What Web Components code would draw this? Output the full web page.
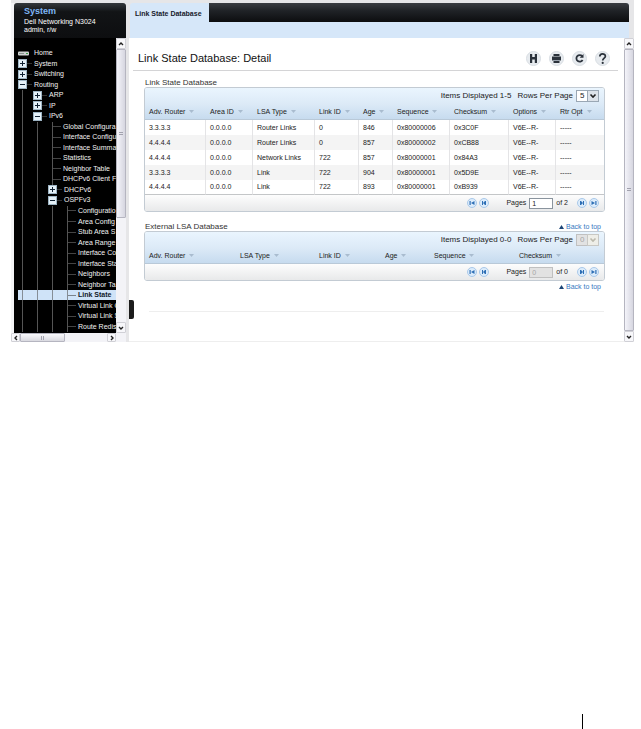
<!DOCTYPE html>
<html lang="en">
<head>
<meta charset="utf-8">
<meta name="viewport" content="width=device-width, initial-scale=1">
<title>Link State Database: Detail</title>
<style>
    body {
        margin: 0;
        min-height: 100vh;
        display: flex;
        flex-direction: column;
        background: #fff;
        color: #222;
        font: 7px/10px "Liberation Sans", Arial, sans-serif;
    }

    footer {
        margin-top: auto;
        padding-right: 58px;
        display: flex;
        justify-content: flex-end;
    }

    footer span {
        width: 1px;
        height: 15px;
        background: #000;
    }
</style>
</head>
<body>
<app-frame>
    <device-header slot="device" name="System" model="Dell Networking N3024" user="admin, r/w"></device-header>
    <nav-tree slot="nav"></nav-tree>
    <scroll-bar slot="nav-y" style="--thumb: 62%"></scroll-bar>
    <scroll-bar slot="nav-x" horizontal style="--thumb: 52%"></scroll-bar>
    <tab-bar slot="tabs">Link State Database</tab-bar>
    <page-title>Link State Database: Detail</page-title>
    <data-table id="lsdb"></data-table>
    <data-table id="external"></data-table>
    <scroll-bar slot="main-y" style="--thumb: 100%"></scroll-bar>
</app-frame>
<footer><span></span></footer>

<script>
class AppFrame extends HTMLElement {
    constructor() {
        super();
        this.attachShadow({ mode: 'open' });
        this.shadowRoot.innerHTML = `
            <style>
                :host {
                    display: grid;
                    grid-template-columns: 115px 1fr;
                    column-gap: 3px;
                    margin: 0 7px 0 11px;
                    padding-top: 3px;
                    background: #e6e6e8;
                }

                aside {
                    display: flex;
                    flex-direction: column;
                    background: #f4f4f6;
                }

                .nav {
                    flex: 1;
                    display: flex;
                    margin-left: 3px;
                    background: #000;
                }

                ::slotted(nav-tree) {
                    flex: 1;
                    min-width: 0;
                }

                .right {
                    display: flex;
                    flex-direction: column;
                    min-width: 0;
                }

                .body {
                    flex: 1;
                    display: flex;
                    position: relative;
                    background: #fff;
                }

                main {
                    flex: 1;
                    display: flex;
                    flex-direction: column;
                    gap: 3px;
                    min-width: 0;
                    border-bottom: 1px solid #eee;
                }

                .rule {
                    height: 1px;
                    margin: 16px 20px 29px;
                    border: 0;
                    background: #eee;
                }

                .handle {
                    position: absolute;
                    left: 0;
                    bottom: 23px;
                    width: 5px;
                    height: 19px;
                    padding: 0;
                    border: 0;
                    border-radius: 0 2px 2px 0;
                    background: #1c1c1c;
                }
            </style>
            <aside>
                <slot name="device"></slot>
                <div class="nav"><slot name="nav"></slot><slot name="nav-y"></slot></div>
                <slot name="nav-x"></slot>
            </aside>
            <div class="right">
                <slot name="tabs"></slot>
                <div class="body">
                    <main>
                        <slot></slot>
                        <hr class="rule">
                    </main>
                    <slot name="main-y"></slot>
                    <button class="handle" aria-label="Collapse navigation"></button>
                </div>
            </div>
        `;
    }
}

class DeviceHeader extends HTMLElement {
    connectedCallback() {
        this.attachShadow({ mode: 'open' });
        this.shadowRoot.innerHTML = `
            <style>
                :host {
                    display: block;
                    box-sizing: border-box;
                    height: 35px;
                    margin-left: 3px;
                    padding: 3px 10px 0;
                    border-radius: 3px 3px 0 0;
                    background: linear-gradient(#34383c, #121416 25%, #0d0e10);
                    color: #fff;
                    line-height: 8px;
                    white-space: nowrap;
                }

                h2 {
                    margin: 0 0 2px;
                    color: #7fb6f5;
                    font-size: 9px;
                    line-height: 10px;
                }

                p {
                    margin: 0;
                }
            </style>
            <h2>${this.getAttribute('name')}</h2>
            <p>${this.getAttribute('model')}</p>
            <p>${this.getAttribute('user')}</p>
        `;
    }
}

// [depth, state, label], where state is '+', '-', 'home' or '' for a leaf
const TREE = [
    [0, 'home', 'Home'],
    [0, '+', 'System'],
    [0, '+', 'Switching'],
    [0, '-', 'Routing'],
    [1, '+', 'ARP'],
    [1, '+', 'IP'],
    [1, '-', 'IPv6'],
    [2, '', 'Global Configura'],
    [2, '', 'Interface Configu'],
    [2, '', 'Interface Summa'],
    [2, '', 'Statistics'],
    [2, '', 'Neighbor Table'],
    [2, '', 'DHCPv6 Client F'],
    [2, '+', 'DHCPv6'],
    [2, '-', 'OSPFv3'],
    [3, '', 'Configuratio'],
    [3, '', 'Area Config'],
    [3, '', 'Stub Area S'],
    [3, '', 'Area Range'],
    [3, '', 'Interface Co'],
    [3, '', 'Interface Sta'],
    [3, '', 'Neighbors'],
    [3, '', 'Neighbor Ta'],
    [3, '', 'Link State'],
    [3, '', 'Virtual Link C'],
    [3, '', 'Virtual Link S'],
    [3, '', 'Route Redis']
];

class NavTree extends HTMLElement {
    connectedCallback() {
        this.attachShadow({ mode: 'open' });
        this.shadowRoot.innerHTML = `
            <style>
                :host {
                    display: flex;
                    overflow: hidden;
                    background: #000;
                }

                ul {
                    flex: 1;
                    display: flex;
                    flex-direction: column;
                    min-width: 0;
                    margin: 0;
                    padding: 10px 0 1px 4px;
                    list-style: none;
                }

                li {
                    flex: 1 0 10px;
                    display: flex;
                    align-items: stretch;
                    white-space: nowrap;
                }

                i {
                    flex: none;
                    width: 15px;
                    background: linear-gradient(#555, #555) 4px 0 / 1px 100% no-repeat;
                }

                .node {
                    flex: none;
                    display: flex;
                    align-items: center;
                    width: 16px;
                }

                .leaf {
                    width: 15px;
                    background:
                        linear-gradient(#555, #555) 4px 0 / 1px 100% no-repeat,
                        linear-gradient(90deg, #444, #444) 4px 50% / 9px 1px no-repeat;
                }

                .branch {
                    background: linear-gradient(90deg, #333, #333) 9px 50% / 5px 1px no-repeat;
                }

                a {
                    display: flex;
                    align-items: center;
                    color: #f2f2f2;
                    text-decoration: none;
                }

                .current {
                    background: #cfe3f8;
                }

                .current a {
                    color: #101828;
                    font-weight: bold;
                }

                .current i, .current .leaf {
                    opacity: 0.6;
                }

                svg {
                    display: block;
                }
            </style>
            <ul>${TREE.map(row => this.renderRow(row)).join('')}</ul>
        `;
    }

    renderRow([depth, state, label]) {
        const current = label === 'Link State';
        return `
            <li class="${current ? 'current' : ''}">
                ${'<i></i>'.repeat(depth)}
                <span class="node ${state === '' ? 'leaf' : state === 'home' ? '' : 'branch'}">${this.renderIcon(state)}</span>
                <a href="#" ${current ? 'aria-current="page"' : ''}>${label}</a>
            </li>
        `;
    }

    renderIcon(state) {
        if (state === 'home') {
            return `
                <svg width="11" height="5" viewBox="0 0 11 5">
                    <rect width="11" height="4" y="0.5" rx="1" fill="#cfd3d2"/>
                    <path d="M1 2.5h5" stroke="#8b9492"/>
                    <path d="M8 2.5h2" stroke="#3f9b4a"/>
                </svg>
            `;
        }
        if (state === '') {
            return '';
        }
        return `
            <svg width="9" height="9" viewBox="0 0 9 9">
                <rect x="0.5" y="0.5" width="8" height="8" fill="#e4f0f8" stroke="#9db4c4"/>
                <path d="M2 4.5h5${state === '+' ? 'M4.5 2v5' : ''}" stroke="#123"/>
            </svg>
        `;
    }
}

class ScrollBar extends HTMLElement {
    connectedCallback() {
        const horizontal = this.hasAttribute('horizontal');
        this.attachShadow({ mode: 'open' });
        this.shadowRoot.innerHTML = `
            <style>
                :host {
                    flex: none;
                    display: flex;
                    flex-direction: column;
                    width: 10px;
                    background: #f3f3f7;
                }

                :host([horizontal]) {
                    flex-direction: row;
                    width: auto;
                    height: 9px;
                    padding-right: 10px;
                }

                button {
                    flex: none;
                    display: grid;
                    place-items: center;
                    width: 10px;
                    height: 11px;
                    padding: 0;
                    border: 1px solid #d0d0d6;
                    border-radius: 1px;
                    background: #f7f7fa;
                }

                :host([horizontal]) button {
                    width: 9px;
                    height: 9px;
                }

                .track {
                    flex: 1;
                    display: flex;
                    flex-direction: inherit;
                }

                .thumb {
                    box-sizing: border-box;
                    height: var(--thumb);
                    display: grid;
                    place-items: center;
                    border: 1px solid #b5b5c0;
                    border-radius: 1px;
                    background: linear-gradient(90deg, #f4f4fa, #d6d6e0);
                }

                :host([horizontal]) .thumb {
                    width: var(--thumb);
                    height: 9px;
                    background: linear-gradient(#fafafd, #d9d9e0);
                }

                .grip {
                    width: 4px;
                    height: 4px;
                    background: repeating-linear-gradient(#a2a2ae 0 1px, transparent 1px 2px);
                }

                :host([horizontal]) .grip {
                    background: repeating-linear-gradient(90deg, #a2a2ae 0 1px, transparent 1px 2px);
                }
            </style>
            <button aria-label="Scroll back">${this.arrow(horizontal ? 'M4 1L2 3L4 5' : 'M1 4L3 2L5 4')}</button>
            <div class="track"><div class="thumb"><div class="grip"></div></div></div>
            <button aria-label="Scroll forward">${this.arrow(horizontal ? 'M2 1L4 3L2 5' : 'M1 2L3 4L5 2')}</button>
        `;
    }

    arrow(path) {
        return `<svg width="6" height="6" viewBox="0 0 6 6"><path d="${path}" fill="none" stroke="#222" stroke-width="1.4"/></svg>`;
    }
}

class TabBar extends HTMLElement {
    connectedCallback() {
        this.attachShadow({ mode: 'open' });
        this.shadowRoot.innerHTML = `
            <style>
                :host {
                    display: flex;
                    align-items: flex-start;
                    height: 35px;
                    margin: 0 5px 0 1px;
                    border-radius: 3px 3px 0 0;
                    overflow: hidden;
                    background: #d6e7f9;
                }

                a {
                    height: 20px;
                    padding: 0 7px 0 5px;
                    color: #16202c;
                    font-weight: bold;
                    line-height: 22px;
                    text-decoration: none;
                    white-space: nowrap;
                }

                .bar {
                    flex: 1;
                    height: 19px;
                    background: linear-gradient(#3a3d42, #202327 40%, #0c0d0f);
                }
            </style>
            <a href="#"><slot></slot></a>
            <div class="bar"></div>
        `;
    }
}

const TOOLS = [
    ['Save', '<path d="M5 4h2.2v3h2.6V4H12v9H9.8V9.5H7.2V13H5z" fill="#2b323b"/>'],
    ['Print', '<path d="M5.5 4h6v2h-6zM4 6.5h9v4H4zM5.5 11h6v2h-6z" fill="#2b323b"/><path d="M5 10.5h7" stroke="#9aa3ad"/>'],
    ['Refresh', '<path d="M11.2 6.2A3.3 3.3 0 1 0 11.6 10" fill="none" stroke="#2b323b" stroke-width="1.8"/><path d="M12.5 4v3.8H8.7z" fill="#2b323b"/>'],
    ['Help', '<path d="M5.8 6.5C5.8 3 11.4 3.1 11.4 6.3C11.4 8.2 8.7 8.2 8.7 10.6" fill="none" stroke="#2b323b" stroke-width="1.7"/><circle cx="8.7" cy="12.9" r="1.1" fill="#2b323b"/>']
];

class PageTitle extends HTMLElement {
    connectedCallback() {
        this.attachShadow({ mode: 'open' });
        this.shadowRoot.innerHTML = `
            <style>
                :host {
                    display: flex;
                    align-items: center;
                    justify-content: space-between;
                    height: 24px;
                    margin: 0 6px 0 4px;
                    padding: 8px 7px 0 5px;
                    border-bottom: 1px solid #d4d4d6;
                }

                h1 {
                    margin: 0;
                    color: #111;
                    font-size: 11px;
                    font-weight: normal;
                    line-height: 16px;
                }

                .tools {
                    display: flex;
                    gap: 6px;
                }

                button {
                    width: 17px;
                    height: 17px;
                    padding: 0;
                    border: 0;
                    background: none;
                }

                svg {
                    display: block;
                }
            </style>
            <h1><slot></slot></h1>
            <div class="tools">
                ${TOOLS.map(([label, art]) => `
                    <button aria-label="${label}">
                        <svg width="17" height="17" viewBox="0 0 17 17">
                            <circle cx="8.5" cy="8.5" r="7" fill="#e7ebef" stroke="#d9dee3"/>
                            ${art}
                        </svg>
                    </button>
                `).join('')}
            </div>
        `;
    }
}

class DataTable extends HTMLElement {
    set data(data) {
        if (!this.shadowRoot) {
            this.attachShadow({ mode: 'open' });
        }
        this.render(data);
    }

    render({ caption, columns, rows, shown, perPage, page, pages, topLink, bottomLink }) {
        const disabled = rows.length === 0 ? 'disabled' : '';
        this.shadowRoot.innerHTML = `
            <style>
                :host {
                    display: block;
                    margin: 0 19px 0 15px;
                }

                .heading {
                    display: flex;
                    align-items: flex-end;
                    justify-content: space-between;
                    height: 13px;
                    color: #333;
                    line-height: 8px;
                    padding: 0 4px 0 1px;
                }

                .heading.linked {
                    height: 16px;
                }

                h2 {
                    margin: 0;
                    font-size: 8px;
                    font-weight: normal;
                }

                .panel {
                    border: 1px solid #c3cbd3;
                    border-radius: 3px;
                    overflow: hidden;
                    background: #fff;
                }

                .options {
                    display: flex;
                    align-items: center;
                    justify-content: flex-end;
                    gap: 6px;
                    height: 16px;
                    padding-right: 5px;
                    background: linear-gradient(#eaf5fe, #dceaf7);
                    font-size: 8px;
                }

                label {
                    display: flex;
                    align-items: center;
                    gap: 3px;
                }

                .select {
                    display: grid;
                    width: 23px;
                    height: 12px;
                }

                select, .select svg {
                    grid-area: 1 / 1;
                }

                .select svg {
                    justify-self: end;
                    pointer-events: none;
                }

                select {
                    appearance: none;
                    width: 23px;
                    height: 12px;
                    margin: 0;
                    padding: 0 3px;
                    border: 1px solid #9aa7b4;
                    border-radius: 0;
                    background: #fff;
                    color: #222;
                    font: inherit;
                }

                table {
                    width: 100%;
                    table-layout: fixed;
                    border-collapse: separate;
                    border-spacing: 0;
                }

                thead {
                    background: linear-gradient(#dceaf7, #c5daee);
                }

                th, td {
                    box-sizing: border-box;
                    padding: 0 0 0 4px;
                    text-align: left;
                    font-weight: normal;
                    white-space: nowrap;
                }

                th {
                    height: 16px;
                    border-bottom: 1px solid #b9c9d8;
                }

                th svg {
                    margin-left: 2px;
                    vertical-align: 1px;
                }

                td {
                    height: 15px;
                    border-right: 1px solid #e4e4e6;
                }

                td:last-child {
                    border-right: 0;
                }

                tbody tr:nth-child(even) {
                    background: #f4f4f4;
                }

                tbody tr:last-child td {
                    border-bottom: 1px solid #c4c6c8;
                }

                .pager {
                    display: flex;
                    align-items: center;
                    justify-content: flex-end;
                    height: 16px;
                    padding-right: 5px;
                    background: linear-gradient(#fdfdfd, #e8e9ea);
                }

                .pair {
                    display: flex;
                    gap: 2px;
                }

                .pair button {
                    width: 10px;
                    height: 10px;
                    padding: 0;
                    border: 0;
                    background: none;
                }

                .pair svg {
                    display: block;
                }

                .pager label {
                    margin: 0 3px 0 17px;
                }

                .total {
                    margin-right: 9px;
                }

                input {
                    box-sizing: border-box;
                    width: 24px;
                    height: 11px;
                    margin: 0;
                    padding: 0 2px;
                    border: 1px solid #8a949e;
                    background: #fff;
                    color: #222;
                    font: inherit;
                }

                input:disabled, select:disabled {
                    border-color: #c0c0c0;
                    background: #e2e2e2;
                    color: #a6a6a6;
                    opacity: 1;
                }

                .top {
                    color: #3678bf;
                    text-decoration: none;
                    white-space: nowrap;
                }

                .after {
                    padding: 1px 4px 0 0;
                    text-align: right;
                }
            </style>
            <div class="heading ${topLink ? 'linked' : ''}">
                <h2>${caption}</h2>
                ${topLink ? this.renderTopLink() : ''}
            </div>
            <div class="panel">
                <div class="options">
                    <span>Items Displayed ${shown}</span>
                    <label for="rows">Rows Per Page
                        <span class="select">
                            <select id="rows" ${disabled}><option>${perPage}</option></select>
                            <svg width="12" height="12" viewBox="0 0 12 12">
                                <rect x="0.5" y="0.5" width="11" height="11" fill="${disabled ? '#eeeee8' : '#dde3ea'}" stroke="${disabled ? '#c8c8c4' : '#9aa7b4'}"/>
                                <path d="M3.5 4.5L6 7L8.5 4.5" fill="none" stroke="${disabled ? '#bbb9ac' : '#222'}" stroke-width="1.6"/>
                            </svg>
                        </span>
                    </label>
                </div>
                <table aria-label="${caption}">
                    <colgroup>${columns.map(([, width]) => `<col ${width ? `style="width: ${width}px"` : ''}>`).join('')}</colgroup>
                    <thead>
                        <tr>${columns.map(([name]) => `<th scope="col">${name} <svg width="5" height="3" viewBox="0 0 5 3"><path d="M0 0h5L2.5 3z" fill="#a9bccf"/></svg></th>`).join('')}</tr>
                    </thead>
                    <tbody>${rows.map(row => `<tr>${row.map(cell => `<td>${cell}</td>`).join('')}</tr>`).join('')}</tbody>
                </table>
                <div class="pager">
                    <div class="pair">${this.renderStep('First page', true, false)}${this.renderStep('Previous page', false, false)}</div>
                    <label for="page">Pages <input id="page" value="${page}" ${disabled}></label>
                    <span class="total">of ${pages}</span>
                    <div class="pair">${this.renderStep('Next page', false, true)}${this.renderStep('Last page', true, true)}</div>
                </div>
            </div>
            ${bottomLink ? `<div class="after">${this.renderTopLink()}</div>` : ''}
        `;
    }

    renderTopLink() {
        return `
            <a class="top" href="#">
                <svg width="5" height="4" viewBox="0 0 5 4"><path d="M0 4L2.5 0L5 4z" fill="#1c4677"/></svg>
                Back to top
            </a>
        `;
    }

    renderStep(label, end, forward) {
        return `
            <button aria-label="${label}">
                <svg width="10" height="10" viewBox="0 0 10 10">
                    <circle cx="5" cy="5" r="4.5" fill="#dcecfb" stroke="#a9c8e8"/>
                    <g fill="#2e6fb5" ${forward ? 'transform="rotate(180 5 5)"' : ''}>
                        <path d="${end ? 'M2.5 3h1.2v4H2.5zM7.5 3v4L4 5z' : 'M3 3h1v4H3zM7 3v4H6L4 5L6 3z'}"/>
                    </g>
                </svg>
            </button>
        `;
    }
}

customElements.define('app-frame', AppFrame);
customElements.define('device-header', DeviceHeader);
customElements.define('nav-tree', NavTree);
customElements.define('scroll-bar', ScrollBar);
customElements.define('tab-bar', TabBar);
customElements.define('page-title', PageTitle);
customElements.define('data-table', DataTable);

document.getElementById('lsdb').data = {
    caption: 'Link State Database',
    columns: [
        ['Adv. Router', 61], ['Area ID', 47], ['LSA Type', 62], ['Link ID', 44], ['Age', 34],
        ['Sequence', 57], ['Checksum', 59], ['Options', 47], ['Rtr Opt', 0]
    ],
    rows: [
        ['3.3.3.3', '0.0.0.0', 'Router Links', '0', '846', '0x80000006', '0x3C0F', 'V6E--R-', '-----'],
        ['4.4.4.4', '0.0.0.0', 'Router Links', '0', '857', '0x80000002', '0xCB88', 'V6E--R-', '-----'],
        ['4.4.4.4', '0.0.0.0', 'Network Links', '722', '857', '0x80000001', '0x84A3', 'V6E--R-', '-----'],
        ['3.3.3.3', '0.0.0.0', 'Link', '722', '904', '0x80000001', '0x5D9E', 'V6E--R-', '-----'],
        ['4.4.4.4', '0.0.0.0', 'Link', '722', '893', '0x80000001', '0xB939', 'V6E--R-', '-----']
    ],
    shown: '1-5',
    perPage: 5,
    page: 1,
    pages: 2
};

document.getElementById('external').data = {
    caption: 'External LSA Database',
    columns: [
        ['Adv. Router', 91], ['LSA Type', 79], ['Link ID', 66], ['Age', 49], ['Sequence', 85], ['Checksum', 0]
    ],
    rows: [],
    shown: '0-0',
    perPage: 0,
    page: 0,
    pages: 0,
    topLink: true,
    bottomLink: true
};
</script>
</body>
</html>
